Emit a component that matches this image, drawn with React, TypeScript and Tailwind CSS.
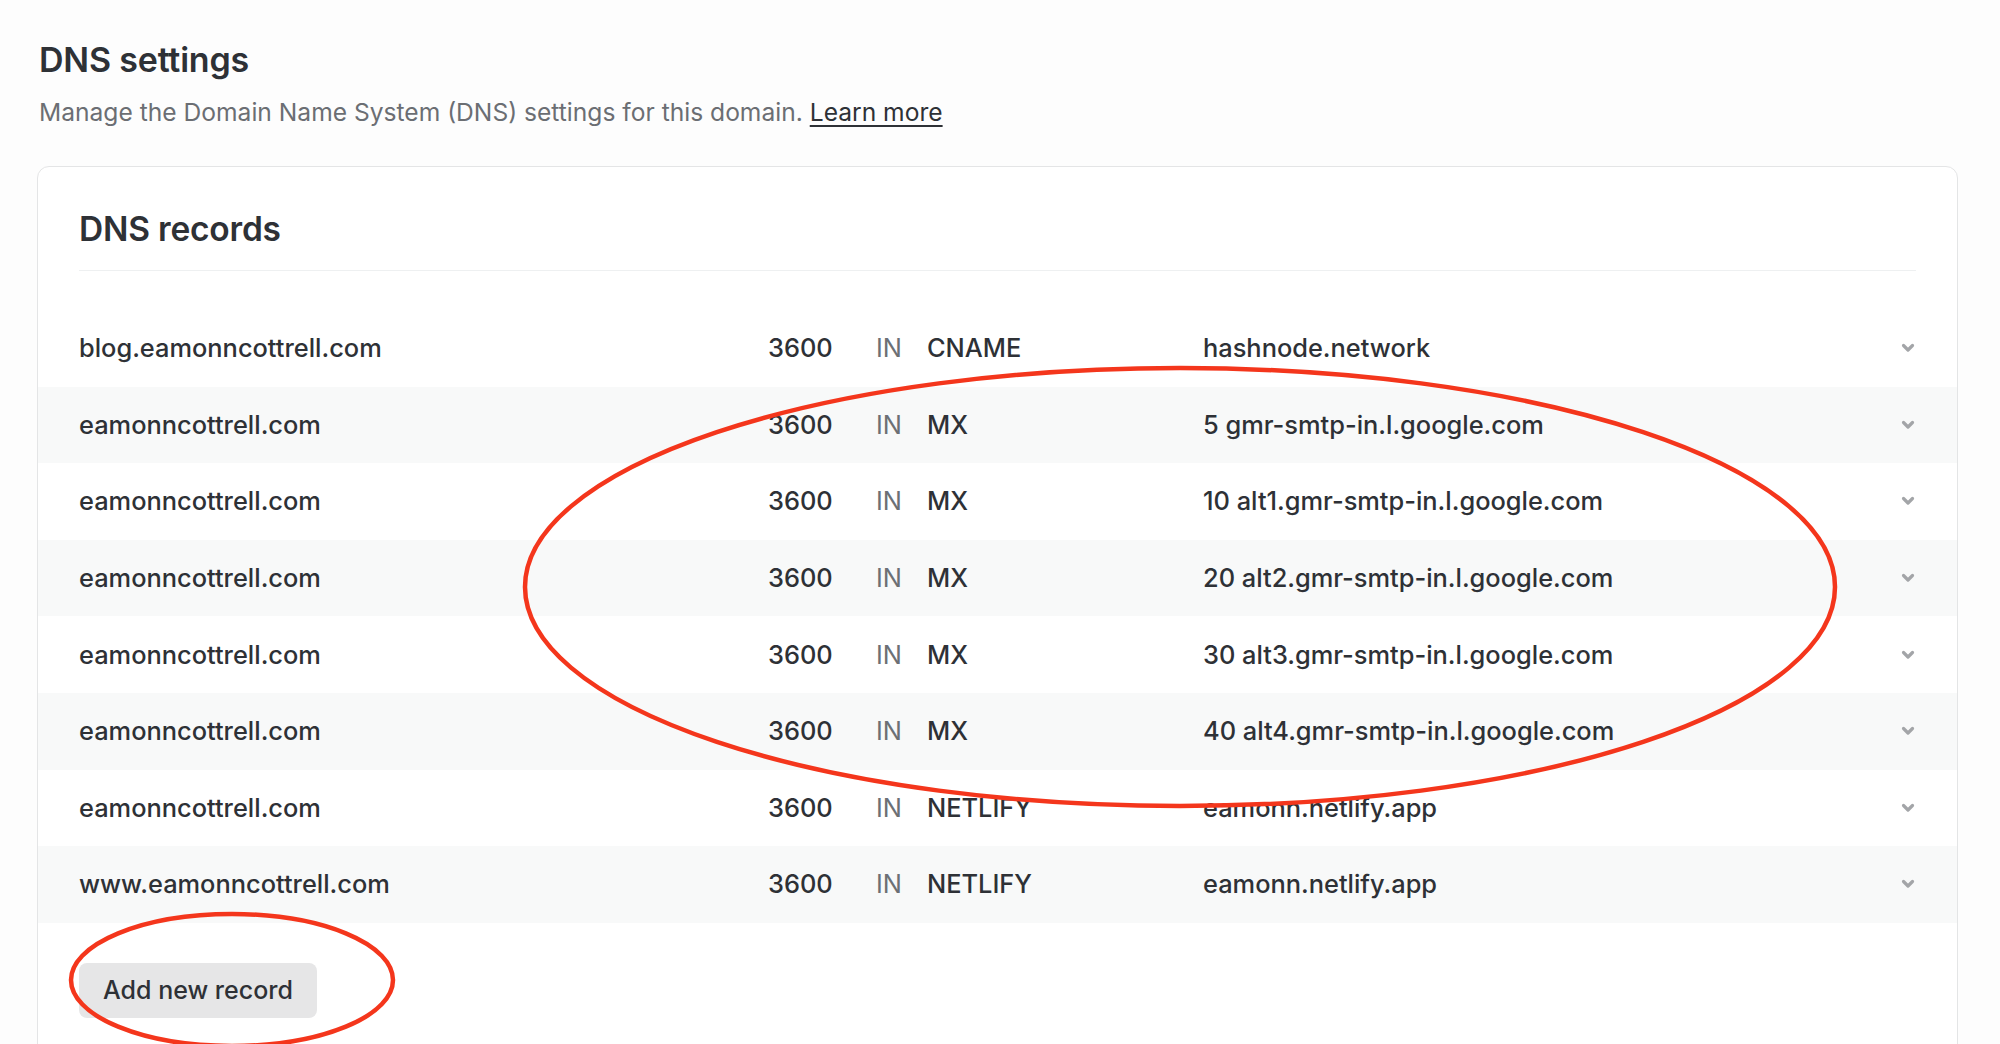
const records = [
  { name: "blog.eamonncottrell.com", ttl: "3600", type: "CNAME", value: "hashnode.network" },
  { name: "eamonncottrell.com", ttl: "3600", type: "MX", value: "5 gmr-smtp-in.l.google.com" },
  { name: "eamonncottrell.com", ttl: "3600", type: "MX", value: "10 alt1.gmr-smtp-in.l.google.com" },
  { name: "eamonncottrell.com", ttl: "3600", type: "MX", value: "20 alt2.gmr-smtp-in.l.google.com" },
  { name: "eamonncottrell.com", ttl: "3600", type: "MX", value: "30 alt3.gmr-smtp-in.l.google.com" },
  { name: "eamonncottrell.com", ttl: "3600", type: "MX", value: "40 alt4.gmr-smtp-in.l.google.com" },
  { name: "eamonncottrell.com", ttl: "3600", type: "NETLIFY", value: "eamonn.netlify.app" },
  { name: "www.eamonncottrell.com", ttl: "3600", type: "NETLIFY", value: "eamonn.netlify.app" },
];

function Chevron() {
  return (
    <svg width="14" height="10" viewBox="0 0 14 10" className="text-[#a3a5a8]">
      <polyline
        points="2.5,2.5 7,7 11.5,2.5"
        fill="none"
        stroke="currentColor"
        strokeWidth="3.2"
        strokeLinecap="round"
        strokeLinejoin="round"
      />
    </svg>
  );
}

function RecordRow({ r, shaded }: { r: (typeof records)[number]; shaded: boolean }) {
  return (
    <div
      className={`flex h-[76.6px] items-center pl-[41px] pr-[42px] text-[25.4px] font-medium text-[#2e3136] ${
        shaded ? "bg-[#f8f9f9]" : ""
      }`}
    >
      <div className="w-[689px] shrink-0">{r.name}</div>
      <div className="w-[108px] shrink-0">{r.ttl}</div>
      <div className="w-[51px] shrink-0 font-normal text-[#6c7075]">IN</div>
      <div className="w-[276px] shrink-0">{r.type}</div>
      <div className="flex-1">{r.value}</div>
      <Chevron />
    </div>
  );
}

export default function App() {
  return (
    <div
      className="relative h-[1044px] overflow-hidden bg-[#fdfdfd] text-[#2e3136]"
      style={{ fontFamily: "Inter, 'Noto Sans', sans-serif" }}
    >
      <div className="pl-[39px] pt-[40px]">
        <h1 className="text-[34px] font-semibold leading-[40px] tracking-[-0.2px]">DNS settings</h1>
        <p className="mt-[17px] text-[24.6px] leading-[30px] text-[#6b6e73]">
          Manage the Domain Name System (DNS) settings for this domain.{" "}
          <a href="#" className="text-[#2e3136] underline underline-offset-[4px]">
            Learn more
          </a>
        </p>
      </div>

      <div className="ml-[37px] mt-[39px] w-[1921px] rounded-[12px] border border-[#e4e5e6] bg-white pb-[60px]">
        <div className="mx-[41px] border-b border-[#eef0f1] pb-[21px] pt-[42px]">
          <h2 className="text-[33.5px] font-semibold leading-[40px] tracking-[-0.2px]">DNS records</h2>
        </div>
        <div className="mt-[39px]">
          {records.map((r, i) => (
            <RecordRow key={i} r={r} shaded={i % 2 === 1} />
          ))}
        </div>
        <div className="mt-[40px] pl-[41px]">
          <button className="h-[55px] w-[238px] rounded-[8px] bg-[#e6e6e7] text-[25px] font-medium text-[#2e3136]">
            Add new record
          </button>
        </div>
      </div>

      <svg className="pointer-events-none absolute left-0 top-0" width="2000" height="1044">
        <ellipse cx="1180" cy="587" rx="655" ry="219" fill="none" stroke="#f4361c" strokeWidth="4.5" />
        <ellipse cx="232" cy="980" rx="161" ry="66" fill="none" stroke="#f4361c" strokeWidth="4.5" />
      </svg>
    </div>
  );
}
